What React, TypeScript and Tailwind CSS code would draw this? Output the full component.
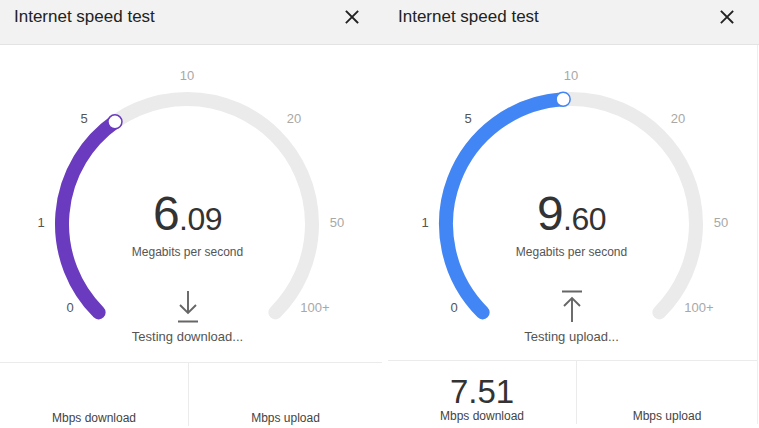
import React from 'react';

const FONT = { fontFamily: '"Liberation Sans", Arial, sans-serif' };

const STOPS = [0, 1, 5, 10, 20, 50, 100];
const LABELS: { t: string; x: number; y: number }[] = [
  { t: '0', x: 70, y: 262 },
  { t: '1', x: 41, y: 177 },
  { t: '5', x: 84, y: 73 },
  { t: '10', x: 187, y: 30 },
  { t: '20', x: 294, y: 73 },
  { t: '50', x: 337, y: 177 },
  { t: '100+', x: 315, y: 262 },
];

const CX = 187;
const CY = 179;
const R = 125;

// angle in degrees (math convention) for a speed value
const angleFor = (v: number) => {
  for (let i = 0; i < STOPS.length - 1; i++) {
    if (v <= STOPS[i + 1]) {
      const frac = (v - STOPS[i]) / (STOPS[i + 1] - STOPS[i]);
      return 225 - 45 * (i + frac);
    }
  }
  return -45;
};

const pt = (deg: number) => {
  const a = (deg * Math.PI) / 180;
  return { x: CX + R * Math.cos(a), y: CY - R * Math.sin(a) };
};

const arc = (from: number, to: number) => {
  const s = pt(from);
  const e = pt(to);
  const large = from - to > 180 ? 1 : 0;
  return `M ${s.x} ${s.y} A ${R} ${R} 0 ${large} 1 ${e.x} ${e.y}`;
};

const CloseIcon = () => (
  <svg width="14" height="14" viewBox="0 0 14 14" className="shrink-0">
    <path d="M1.5 1.5 L12.5 12.5 M12.5 1.5 L1.5 12.5" stroke="#222" strokeWidth="1.8" strokeLinecap="square" />
  </svg>
);

const DownloadIcon = () => (
  <svg width="20" height="33" viewBox="0 0 20 33">
    <path d="M10 1 V23 M2 15 L10 23 L18 15 M0 31.5 H20" stroke="#666" strokeWidth="1.9" fill="none" />
  </svg>
);

const UploadIcon = () => (
  <svg width="20" height="33" viewBox="0 0 20 33">
    <path d="M0 1.5 H20 M10 8 V32 M2 16 L10 8 L18 16" stroke="#666" strokeWidth="1.9" fill="none" />
  </svg>
);

type Props = {
  value: number;
  whole: string;
  frac: string;
  color: string;
  mode: 'download' | 'upload';
  bodyH: number;
  down?: string;
  className?: string;
  bottomClass?: string;
  bodyClass?: string;
};

const SpeedCard: React.FC<Props> = ({
  value, whole, frac, color, mode, bodyH, down, className, bottomClass, bodyClass,
}) => {
  const a = angleFor(value);
  const knob = pt(a);
  const passed = STOPS.filter((s) => s <= value).length;

  return (
    <div className={`flex flex-col bg-white ${className ?? ''}`} style={FONT}>
      <div className="h-[45px] bg-[#f2f2f2] border-b border-[#e3e3e3] flex items-start justify-between pt-[6px] pl-[14px] pr-[25px]">
        <span className="text-[17px] leading-[22px] text-[#222]">Internet speed test</span>
        <div className="pt-[4px]"><CloseIcon /></div>
      </div>

      <div className={`flex flex-col ${bodyClass ?? ''}`}>
        <div className="relative" style={{ height: bodyH }}>
          <svg width="375" height={bodyH} className="block">
            <path d={arc(225, -45)} stroke="#ebebeb" strokeWidth="14" fill="none" strokeLinecap="round" />
            <path d={arc(225, a)} stroke={color} strokeWidth="14" fill="none" strokeLinecap="round" />
            <circle cx={knob.x} cy={knob.y} r="7" fill="#fff" stroke={color} strokeWidth="1.5" />
            {LABELS.map((l, i) => (
              <text
                key={l.t}
                x={l.x}
                y={l.y}
                textAnchor="middle"
                dominantBaseline="central"
                fontSize="13"
                fill={i < passed ? '#555' : '#a8a8a8'}
                style={FONT}
              >
                {l.t}
              </text>
            ))}
          </svg>

          <div className="absolute inset-x-0 top-[146px] w-[375px] flex flex-col items-center">
            <div className="text-[48px] leading-[46px] text-[#333] tracking-[-0.5px]">
              {whole}<span className="text-[32px]">{frac}</span>
            </div>
            <div className="mt-[2px] text-[12px] leading-[16px] text-[#555]">Megabits per second</div>
            <div className="mt-[30px] h-[34px] flex items-start">
              {mode === 'download' ? <DownloadIcon /> : <UploadIcon />}
            </div>
            <div className="mt-[4px] text-[13px] leading-[18px] text-[#555]">
              {mode === 'download' ? 'Testing download...' : 'Testing upload...'}
            </div>
          </div>
        </div>

        <div className={`flex flex-1 border-t border-[#ebebeb] h-[67px] ${bottomClass ?? ''}`}>
          <div className="w-[189px] border-r border-[#ebebeb] flex flex-col items-center pt-[15px]">
            <div className="h-[32px] text-[33px] leading-[32px] text-[#333]">{down ?? ''}</div>
            <div className="text-[12px] leading-[16px] text-[#444]">Mbps download</div>
          </div>
          <div className="flex-1 flex flex-col items-center pt-[15px]">
            <div className="h-[32px]" />
            <div className="text-[12px] leading-[16px] text-[#444]">Mbps upload</div>
          </div>
        </div>
      </div>
    </div>
  );
};

export default function App() {
  return (
    <div className="w-[759px] h-[428px] overflow-hidden bg-white flex">
      <SpeedCard
        className="w-[384px]"
        value={6.09}
        whole="6"
        frac=".09"
        color="#6a3bbf"
        mode="download"
        bodyH={317}
        bottomClass="mr-[2px]"
      />
      <SpeedCard
        className="w-[375px]"
        bodyClass="border-r border-[#eeeeee] mr-[1px]"
        value={9.6}
        whole="9"
        frac=".60"
        color="#4285f4"
        mode="upload"
        bodyH={315}
        down="7.51"
        bottomClass="ml-[4px]"
      />
    </div>
  );
}
